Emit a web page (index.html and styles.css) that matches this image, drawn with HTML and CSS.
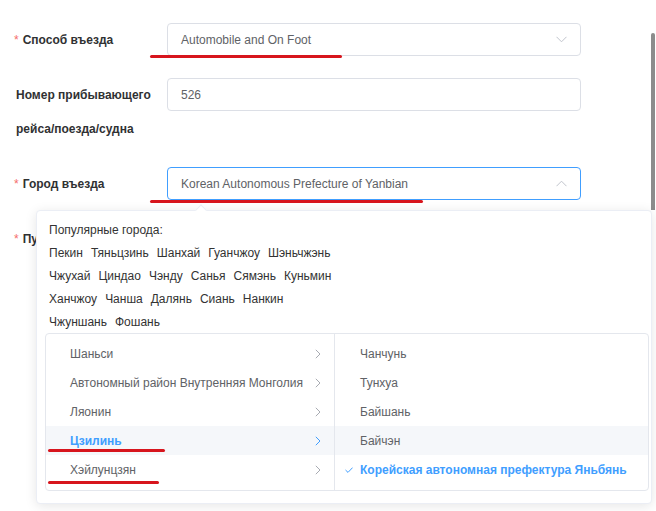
FILE: index.html
```html
<!DOCTYPE html>
<html lang="ru">
<head>
<meta charset="utf-8">
<title>Форма въезда</title>
<link rel="stylesheet" href="styles.css">
</head>
<body>
<div class="screen">
  <div class="page">
    <form class="form">
      <div class="form-item">
        <label class="label"><span class="req">*</span>Способ въезда</label>
        <div class="control select">
          <span class="value">Automobile and On Foot</span>
          <svg class="chev" width="11" height="7" viewBox="0 0 11 7"><polyline points="0.5,0.8 5.5,5.8 10.5,0.8" fill="none" stroke="#c0c4cc" stroke-width="1"/></svg>
        </div>
      </div>
      <div class="form-item">
        <label class="label label-plain">Номер прибывающего рейса/поезда/судна</label>
        <div class="control">
          <span class="value">526</span>
        </div>
      </div>
      <div class="form-item">
        <label class="label"><span class="req">*</span>Город въезда</label>
        <div class="control select is-focus">
          <span class="value">Korean Autonomous Prefecture of Yanbian</span>
          <svg class="chev" width="11" height="7" viewBox="0 0 11 7"><polyline points="0.5,6.2 5.5,1.2 10.5,6.2" fill="none" stroke="#c0c4cc" stroke-width="1"/></svg>
        </div>
      </div>
      <div class="form-item">
        <label class="label"><span class="req">*</span>Пункт въезда</label>
        <div class="control select">
          <span class="value"></span>
        </div>
      </div>
    </form>
  </div>
  <div class="scrollbar"><div class="thumb"></div></div>

  <div class="popover">
    <div class="popover-arrow"></div>
    <div class="hot">
      <div class="hot-title">Популярные города:</div>
      <div class="hot-row"><span>Пекин</span><span>Тяньцзинь</span><span>Шанхай</span><span>Гуанчжоу</span><span>Шэньчжэнь</span></div>
      <div class="hot-row"><span>Чжухай</span><span>Циндао</span><span>Чэнду</span><span>Санья</span><span>Сямэнь</span><span>Куньмин</span></div>
      <div class="hot-row"><span>Ханчжоу</span><span>Чанша</span><span>Далянь</span><span>Сиань</span><span>Нанкин</span></div>
      <div class="hot-row"><span>Чжуншань</span><span>Фошань</span></div>
    </div>
    <div class="cascader">
      <ul class="menu menu-left">
        <li class="item"><span>Шаньси</span><svg class="arr" width="6" height="10" viewBox="0 0 6 10"><polyline points="0.8,0.8 5,5 0.8,9.2" fill="none" stroke="currentColor" stroke-width="1"/></svg></li>
        <li class="item"><span>Автономный район Внутренняя Монголия</span><svg class="arr" width="6" height="10" viewBox="0 0 6 10"><polyline points="0.8,0.8 5,5 0.8,9.2" fill="none" stroke="currentColor" stroke-width="1"/></svg></li>
        <li class="item"><span>Ляонин</span><svg class="arr" width="6" height="10" viewBox="0 0 6 10"><polyline points="0.8,0.8 5,5 0.8,9.2" fill="none" stroke="currentColor" stroke-width="1"/></svg></li>
        <li class="item is-active"><span>Цзилинь</span><svg class="arr" width="6" height="10" viewBox="0 0 6 10"><polyline points="0.8,0.8 5,5 0.8,9.2" fill="none" stroke="currentColor" stroke-width="1"/></svg></li>
        <li class="item"><span>Хэйлунцзян</span><svg class="arr" width="6" height="10" viewBox="0 0 6 10"><polyline points="0.8,0.8 5,5 0.8,9.2" fill="none" stroke="currentColor" stroke-width="1"/></svg></li>
      </ul>
      <ul class="menu menu-right">
        <li class="item"><span class="check"></span><span>Чанчунь</span></li>
        <li class="item"><span class="check"></span><span>Тунхуа</span></li>
        <li class="item"><span class="check"></span><span>Байшань</span></li>
        <li class="item is-hover"><span class="check"></span><span>Байчэн</span></li>
        <li class="item is-selected"><span class="check"><svg width="8" height="6" viewBox="0 0 8 6"><polyline points="0.5,3 3,5.4 7.6,0.6" fill="none" stroke="#409eff" stroke-width="1"/></svg></span><span>Корейская автономная префектура Яньбянь</span></li>
      </ul>
    </div>
  </div>

  <div class="mark mark-1"></div>
  <div class="mark mark-2"></div>
  <div class="mark mark-3"></div>
  <div class="mark mark-4"></div>
</div>
</body>
</html>
```

FILE: styles.css
```css
* { box-sizing: border-box; }
html, body { margin: 0; padding: 0; background: #fff; }
body {
  font-family: "Liberation Sans", Arial, sans-serif;
  font-size: 12px;
  color: #606266;
}
.screen {
  position: relative;
  width: 656px;
  height: 511px;
  overflow: hidden;
  display: flex;
}
.page {
  flex: 1;
  padding: 23px 0 0 14px;
}
.form-item {
  display: flex;
  margin-bottom: 21px;
}
.label {
  width: 153px;
  flex: none;
  line-height: 34px;
  font-weight: bold;
  color: #303133;
  padding-right: 8px;
}
.label-plain { padding-left: 2px; padding-right: 4px; }
.req {
  color: #f56c6c;
  margin-right: 4px;
  font-weight: normal;
}
.control {
  width: 414px;
  height: 33px;
  border: 1px solid #dcdfe6;
  border-radius: 4px;
  padding: 0 13px;
  display: flex;
  align-items: center;
  justify-content: space-between;
  color: #606266;
  font-size: 12px;
}
.control.is-focus { border-color: #409eff; }
.chev { margin-right: 0; flex: none; }
.scrollbar {
  width: 6px;
  flex: none;
  padding-top: 33px;
}
.thumb {
  width: 4px;
  margin-left: 1px;
  height: 177px;
  background: #8c8c8c;
  border-radius: 2px 2px 0 0;
}

.popover {
  position: absolute;
  left: 36px;
  top: 210px;
  width: 616px;
  height: 294px;
  background: #fff;
  border: 1px solid #ebeef5;
  border-radius: 4px;
  box-shadow: 0 2px 12px rgba(0, 0, 0, 0.1);
  padding: 8px 2px 9px 8px;
}
.popover-arrow {
  position: absolute;
  top: -5px;
  left: 160px;
  width: 8px;
  height: 8px;
  background: #fff;
  border-left: 1px solid #ebeef5;
  border-top: 1px solid #ebeef5;
  transform: rotate(45deg);
}
.hot {
  padding-left: 4px;
  line-height: 23px;
  color: #333;
}
.hot-row {
  display: flex;
  gap: 8px;
}
.cascader {
  display: flex;
  width: 604px;
  margin-top: -1px;
  border: 1px solid #e4e7ed;
  border-radius: 4px;
}
.menu {
  list-style: none;
  margin: 0;
  padding: 5px 0 6px;
}
.menu-left {
  width: 289px;
  border-right: 1px solid #e4e7ed;
}
.menu-right { flex: 1; }
.item {
  height: 29px;
  display: flex;
  align-items: center;
  color: #606266;
}
.menu-left .item {
  justify-content: space-between;
  padding: 0 13px 0 24px;
}
.arr { color: #a8abb2; flex: none; }
.menu-left .item.is-active {
  background: #f5f7fa;
  color: #409eff;
  font-weight: bold;
}
.menu-left .item.is-active .arr { color: #409eff; }
.menu-right .item { padding-left: 10px; }
.check {
  width: 15px;
  flex: none;
  display: flex;
  align-items: center;
}
.menu-right .item.is-hover { background: #f5f7fa; }
.menu-right .item.is-selected {
  color: #409eff;
  font-weight: bold;
}

.mark {
  position: absolute;
  height: 3px;
  background: #d7151d;
  border-radius: 2px;
}
.mark-1 { left: 150px; top: 55px; width: 192px; }
.mark-2 { left: 150px; top: 200px; width: 273px; }
.mark-3 { left: 48px; top: 449px; width: 117px; }
.mark-4 { left: 48px; top: 481px; width: 111px; }
```
